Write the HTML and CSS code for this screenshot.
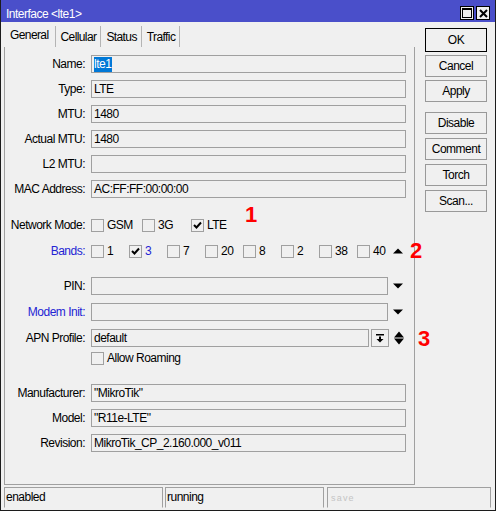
FILE: index.html
```html
<!DOCTYPE html>
<html>
<head>
<meta charset="utf-8">
<title>Interface &lt;lte1&gt;</title>
<link rel="stylesheet" href="styles.css">
</head>
<body>
<div class="window">
  <div class="titlebar">
    <span class="title">Interface &lt;lte1&gt;</span>
    <div class="tb-btns">
      <span class="tb-btn"><svg width="10" height="10" viewBox="0 0 10 10"><rect x="0.5" y="0.5" width="9" height="9" fill="none" stroke="#000"/><rect x="0" y="0" width="10" height="2" fill="#000"/></svg></span>
      <span class="tb-btn"><svg width="9" height="9" viewBox="0 0 9 9"><path d="M1 1 L8 8 M8 1 L1 8" stroke="#000" stroke-width="2"/></svg></span>
    </div>
  </div>
  <div class="body">
    <div class="main">
      <div class="tabs">
        <div class="tab active">General</div>
        <div class="tab">Cellular</div>
        <div class="tab">Status</div>
        <div class="tab">Traffic</div>
      </div>
      <div class="panel">
        <div class="row first"><span class="lbl">Name:</span><div class="field w-full"><span class="sel">lte1</span></div></div>
        <div class="row"><span class="lbl">Type:</span><div class="field w-full">LTE</div></div>
        <div class="row"><span class="lbl">MTU:</span><div class="field w-full">1480</div></div>
        <div class="row"><span class="lbl">Actual MTU:</span><div class="field w-full">1480</div></div>
        <div class="row"><span class="lbl">L2 MTU:</span><div class="field w-full"></div></div>
        <div class="row"><span class="lbl">MAC Address:</span><div class="field w-full">AC:FF:FF:00:00:00</div></div>

        <div class="row gap-18"><span class="lbl">Network Mode:</span>
          <div class="checks">
            <span class="chk nm-gsm"><span class="box"></span>GSM</span>
            <span class="chk nm-3g"><span class="box"></span>3G</span>
            <span class="chk"><span class="box"><svg width="9" height="8" viewBox="0 0 9 8"><path d="M1 4 L3.5 6.5 L8 1.5" fill="none" stroke="#000" stroke-width="2"/></svg></span>LTE</span>
          </div>
        </div>
        <div class="row gap-8"><span class="lbl blue">Bands:</span>
          <div class="checks bands">
            <span class="chk band"><span class="box"></span>1</span>
            <span class="chk band blue"><span class="box"><svg width="9" height="8" viewBox="0 0 9 8"><path d="M1 4 L3.5 6.5 L8 1.5" fill="none" stroke="#000" stroke-width="2"/></svg></span>3</span>
            <span class="chk band"><span class="box"></span>7</span>
            <span class="chk band"><span class="box"></span>20</span>
            <span class="chk band"><span class="box"></span>8</span>
            <span class="chk band"><span class="box"></span>2</span>
            <span class="chk band"><span class="box"></span>38</span>
            <span class="chk band"><span class="box"></span>40</span>
          </div>
          <span class="arrow"><svg width="10" height="6" viewBox="0 0 10 6"><path d="M0 5.5 L5 0.5 L10 5.5 Z" fill="#000"/></svg></span>
        </div>

        <div class="row gap-17"><span class="lbl">PIN:</span><div class="field w-short"></div>
          <span class="arrow"><svg width="10" height="6" viewBox="0 0 10 6"><path d="M0 0.5 L10 0.5 L5 5.5 Z" fill="#000"/></svg></span>
        </div>
        <div class="row gap-8"><span class="lbl blue">Modem Init:</span><div class="field w-short"></div>
          <span class="arrow"><svg width="10" height="6" viewBox="0 0 10 6"><path d="M0 0.5 L10 0.5 L5 5.5 Z" fill="#000"/></svg></span>
        </div>
        <div class="row gap-8"><span class="lbl">APN Profile:</span><div class="field w-apn">default</div>
          <span class="ddbtn"><svg width="8" height="9" viewBox="0 0 8 9"><rect x="0" y="0" width="8" height="1.5" fill="#000"/><rect x="3" y="2.5" width="2" height="3" fill="#000"/><path d="M0.5 5 L7.5 5 L4 8.5 Z" fill="#000"/></svg></span>
          <span class="arrow updown"><svg width="10" height="14" viewBox="0 0 10 14"><path d="M0 6.5 L5 0.5 L10 6.5 Z M0 7.5 L10 7.5 L5 13.5 Z" fill="#000"/></svg></span>
        </div>
        <div class="row gap-2"><span class="lbl"></span>
          <span class="chk"><span class="box"></span>Allow Roaming</span>
        </div>

        <div class="row gap-17"><span class="lbl">Manufacturer:</span><div class="field w-full">"MikroTik"</div></div>
        <div class="row"><span class="lbl">Model:</span><div class="field w-full">"R11e-LTE"</div></div>
        <div class="row"><span class="lbl">Revision:</span><div class="field w-full">MikroTik_CP_2.160.000_v011</div></div>
      </div>
    </div>
    <div class="side">
      <button class="btn ok">OK</button>
      <button class="btn">Cancel</button>
      <button class="btn">Apply</button>
      <button class="btn grp">Disable</button>
      <button class="btn sp4">Comment</button>
      <button class="btn sp4">Torch</button>
      <button class="btn sp4">Scan...</button>
    </div>
  </div>
  <div class="statusbar">
    <div class="cell c1">enabled</div>
    <div class="cell c2">running</div>
    <div class="cell c3"><span class="save">save</span></div>
  </div>
  <span class="anno a1">1</span>
  <span class="anno a2">2</span>
  <span class="anno a3">3</span>
</div>
</body>
</html>
```

FILE: styles.css
```css
* { box-sizing: border-box; }
html, body { margin: 0; padding: 0; }
body {
  font-family: "Liberation Sans", Arial, sans-serif;
  font-size: 12px;
  letter-spacing: -0.5px;
  color: #000;
  background: #f0f0f0;
}
.window {
  position: relative;
  width: 496px;
  height: 511px;
  border: 1px solid #1c1c1c;
  border-top: 0;
  background: #f0f0f0;
}
.titlebar {
  height: 22px;
  background: #4a4fca;
  color: #fff;
  display: flex;
  justify-content: space-between;
  align-items: flex-start;
}
.title { padding: 7px 0 0 5px; line-height: 14px; }
.tb-btns { display: flex; gap: 2px; margin: 6px 5px 0 0; }
.tb-btn {
  width: 14px; height: 14px;
  border: 1px solid #000;
  background: #f0f0f0;
  display: flex; align-items: center; justify-content: center;
}
.body { display: flex; height: 463px; }
.main { width: 411px; margin-left: 3px; display: flex; flex-direction: column; }
.tabs { height: 25px; display: flex; }
.tab {
  margin-top: 4px;
  height: 21px;
  padding: 4px 4px 0 5px;
  line-height: 14px;
  letter-spacing: -0.6px;
  border-right: 1px solid #b4b4b4;
}
.tab.active { padding: 2px 6px 0 6px; }
.panel {
  flex: 1;
  border: 1px solid #a0a0a0;
  border-top: 0;
  padding-top: 8px;
  display: flex;
  flex-direction: column;
}
.row { display: flex; align-items: center; height: 18px; margin-top: 7px; flex: none; }
.row.first { margin-top: 0; }
.row.gap-18 { margin-top: 18px; }
.row.gap-17 { margin-top: 17px; }
.row.gap-8 { margin-top: 8px; }
.row.gap-2 { margin-top: 2px; }
.lbl { width: 80px; margin-right: 6px; text-align: right; flex: none; white-space: nowrap; }
.blue { color: #2424d4; }
.field {
  height: 18px;
  border: 1px solid #a0a0a0;
  padding-left: 2px;
  line-height: 16px;
  flex: none;
  white-space: nowrap;
  overflow: hidden;
}
.w-full { width: 315px; }
.w-short { width: 297px; }
.w-apn { width: 278px; }
.sel { background: #0078d7; color: #fff; padding: 0 1px 1px 0; }
.arrow { margin-left: 5px; width: 10px; display: flex; flex: none; }
.ddbtn {
  margin-left: 2px; width: 18px; height: 18px;
  border: 1px solid #a0a0a0;
  display: flex; align-items: center; justify-content: center; flex: none;
}
.checks { display: flex; align-items: center; }
.bands { width: 297px; }
.chk { display: flex; align-items: center; flex: none; white-space: nowrap; }
.box {
  width: 13px; height: 13px;
  border: 1px solid #a0a0a0;
  margin-right: 3px;
  display: flex; align-items: center; justify-content: center; flex: none;
}
.nm-gsm { width: 51px; }
.nm-3g { width: 49px; }
.band { width: 38px; }
.side { width: 62px; margin-left: 10px; display: flex; flex-direction: column; padding-top: 6px; }
.btn {
  height: 22px;
  margin: 3px 0 0;
  padding: 0;
  border: 1px solid #999;
  background: #f0f0f0;
  color: #000;
  font: inherit;
  letter-spacing: inherit;
  display: flex; align-items: center; justify-content: center;
  flex: none;
}
.btn.ok { height: 24px; margin-top: 0; border-color: #000; }
.btn.grp { margin-top: 10px; }
.btn.sp4 { margin-top: 4px; }
.statusbar { display: flex; height: 25px; padding: 2px 4px 0 3px; }
.cell {
  height: 21px;
  border: 1px solid #a0a0a0;
  border-bottom-color: #f0f0f0;
  padding-left: 1px;
  line-height: 19px;
  white-space: nowrap;
}
.c1 { width: 159px; }
.c2 { width: 159px; margin-left: 2px; }
.c3 { flex: 1; margin-left: 3px; }
.save { color: #c4c4c4; font-size: 9px; letter-spacing: 1.2px; padding-left: 2px; }
.anno {
  position: absolute;
  color: #ff0000;
  font-weight: bold;
  font-size: 22px;
  line-height: 22px;
  letter-spacing: 0;
}
.a1 { left: 244px; top: 204px; }
.a2 { left: 409px; top: 240px; }
.a3 { left: 417px; top: 328px; }
```
